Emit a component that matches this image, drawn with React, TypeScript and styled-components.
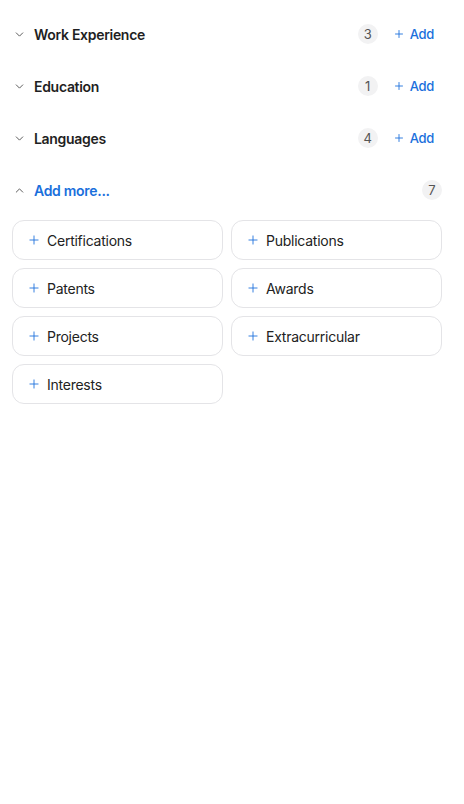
import React from "react";
import styled, { createGlobalStyle } from "styled-components";
import { ChevronDown, ChevronUp, Plus } from "lucide-react";

const GlobalStyle = createGlobalStyle`
  body {
    margin: 0;
    background: #fff;
    font-family: Inter, "Noto Sans", sans-serif;
    -webkit-font-smoothing: antialiased;
  }
`;

const Page = styled.div`
  display: flex;
  flex-direction: column;
  padding: 8px 22px 0 12px;
`;

const SectionRow = styled.div`
  display: flex;
  align-items: center;
  height: 52px;
`;

const Chevron = styled.span`
  display: flex;
  align-items: center;
  justify-content: center;
  width: 14px;
  color: #555;
  margin-right: 8px;
`;

const Title = styled.span<{ $accent?: boolean }>`
  flex: 1;
  font-size: 14px;
  font-weight: 600;
  letter-spacing: -0.3px;
  color: ${(p) => (p.$accent ? "#1a6fdc" : "#1f1f23")};
`;

const Count = styled.span`
  display: flex;
  align-items: center;
  justify-content: center;
  width: 20px;
  height: 20px;
  border-radius: 50%;
  background: #f2f2f3;
  color: #555;
  font-size: 13px;
`;

const AddButton = styled.button`
  display: flex;
  align-items: center;
  gap: 5px;
  margin-left: 9px;
  padding: 4px 8px 4px 6px;
  border: none;
  background: none;
  color: #1a6fdc;
  font-family: inherit;
  font-size: 13px;
  font-weight: 500;
  letter-spacing: -0.3px;
  cursor: pointer;
`;

const Grid = styled.div`
  display: grid;
  grid-template-columns: 1fr 1fr;
  gap: 8px;
  margin-top: 4px;
`;

const Card = styled.button`
  display: flex;
  align-items: center;
  gap: 6px;
  height: 40px;
  padding: 0 14px;
  border: 1px solid #e4e4e7;
  border-radius: 12px;
  background: #fff;
  color: #222;
  font-family: inherit;
  font-size: 14px;
  letter-spacing: -0.25px;
  text-align: left;
  cursor: pointer;
  svg {
    color: #1a6fdc;
  }
`;

const sections = [
  { name: "Work Experience", count: 3 },
  { name: "Education", count: 1 },
  { name: "Languages", count: 4 },
];

const extras = [
  "Certifications",
  "Publications",
  "Patents",
  "Awards",
  "Projects",
  "Extracurricular",
  "Interests",
];

const App: React.FC = () => {
  return (
    <>
      <GlobalStyle />
      <Page>
        {sections.map((s) => (
          <SectionRow key={s.name}>
            <Chevron>
              <ChevronDown size={13} strokeWidth={1.75} />
            </Chevron>
            <Title>{s.name}</Title>
            <Count>{s.count}</Count>
            <AddButton>
              <Plus size={12} strokeWidth={1.75} />
              Add
            </AddButton>
          </SectionRow>
        ))}
        <SectionRow>
          <Chevron>
            <ChevronUp size={13} strokeWidth={1.75} />
          </Chevron>
          <Title $accent>Add more...</Title>
          <Count>{extras.length}</Count>
        </SectionRow>
        <Grid>
          {extras.map((e) => (
            <Card key={e}>
              <Plus size={14} strokeWidth={1.5} />
              {e}
            </Card>
          ))}
        </Grid>
      </Page>
    </>
  );
};

export default App;
